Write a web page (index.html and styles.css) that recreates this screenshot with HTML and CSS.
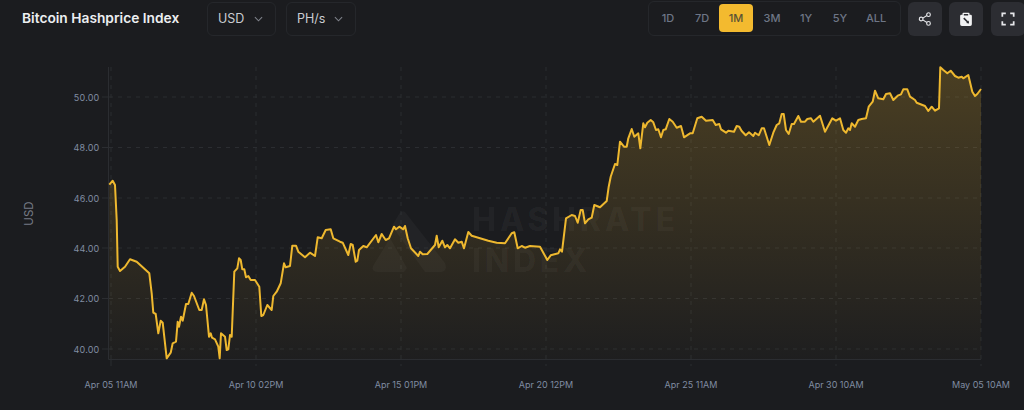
FILE: index.html
```html
<!DOCTYPE html>
<html lang="en">
<head>
<meta charset="utf-8">
<title>Bitcoin Hashprice Index</title>
<link rel="stylesheet" href="styles.css">
</head>
<body>
<header class="toolbar">
  <h1 class="title">Bitcoin Hashprice Index</h1>
  <div class="select select-usd">USD
    <svg class="chev" viewBox="0 0 10 6"><path d="M1 1l4 4 4-4"/></svg>
  </div>
  <div class="select select-unit">PH/s
    <svg class="chev" viewBox="0 0 10 6"><path d="M1 1l4 4 4-4"/></svg>
  </div>
  <div class="ranges">
    <span class="range r1">1D</span>
    <span class="range r2">7D</span>
    <span class="range active">1M</span>
    <span class="range r3">3M</span>
    <span class="range r4">1Y</span>
    <span class="range r5">5Y</span>
    <span class="range r6">ALL</span>
  </div>
  <div class="actions">
    <button class="action" aria-label="Share">
      <svg viewBox="0 0 16 16" class="ico"><circle cx="3.600" cy="8" r="2.100"/><circle cx="12" cy="3" r="2.100"/><circle cx="12" cy="13" r="2.100"/><path d="M5.500 7 10.100 4.100M5.500 9 10.100 11.900"/></svg>
    </button>
    <button class="action" aria-label="Copy">
      <svg viewBox="0 0 16 16" class="ico-solid"><path fill-rule="evenodd" d="M5 .8h6a1 1 0 0 1 1 1V3h1.200A1.500 1.500 0 0 1 14.700 4.500V14a2 2 0 0 1-2 2H3.300a2 2 0 0 1-2-2V4.500A1.500 1.500 0 0 1 2.800 3H4V1.800a1 1 0 0 1 1-1zM5.500 2.200V4h5V2.200zM5.600 6.800 4.800 7.600 9 11.800 8.200 12.600 11.500 13 11.100 9.700 10.300 10.500 6.100 6.300z"/></svg>
    </button>
    <button class="action" aria-label="Fullscreen">
      <svg viewBox="0 0 16 16" class="ico ico-bold"><path d="M1.500 5.500V1.500H5.500M10.500 1.500H14.500V5.500M14.500 10.500V14.500H10.500M5.500 14.500H1.500V10.500"/></svg>
    </button>
  </div>
</header>
<svg class="chart" viewBox="0 36 1024 374" width="1024" height="374">
  <defs>
    <linearGradient id="area" gradientUnits="userSpaceOnUse" x1="0" y1="67" x2="0" y2="359">
      <stop offset="0" stop-color="#f3ba2f" stop-opacity="0.22"/>
      <stop offset="1" stop-color="#f3ba2f" stop-opacity="0.015"/>
    </linearGradient>
  </defs>

  <g class="grid">
    <path d="M109 97H981M109 147.500H981M109 198H981M109 248H981M109 298.500H981M109 349H981"/>
    <path d="M111 67V359M256 67V366M401 67V366M546 67V366M691 67V366M836 67V366M981 67V366"/>
  </g>
  <g class="axis">
    <path d="M108.500 67V359.500H981M111 359.500V366M102 97H108M102 147.500H108M102 198H108M102 248H108M102 298.500H108M102 349H108"/>
  </g>

  <g class="wm">
    <path d="M405 212 Q402 210 399 214 L392 226 L425 272 H441 Q448 271 445 263 Z"/>
    <path d="M390 238 L373 266 Q371 272 378 272 H404 L407 268 Z"/>
    <text x="472" y="231" class="wm-text">HASHRATE</text>
    <text x="472" y="272" class="wm-text">INDEX</text>
  </g>

  <path class="area" d="M109.300 184.700 112.700 180.700 115 185 116.700 220 117.700 266.700 120 271 125 266.700 130 259.300 136.700 261.700 143.300 267.700 149.300 273.300 151.700 293.300 153.300 312.700 155.700 314 158.300 333.300 160.700 320.700 162.700 322.700 166.700 358.300 170.700 352.700 172.700 343.300 176 341.700 177.700 321.700 179 326.700 181 316.700 182.700 320.700 186 304 188.300 304 191.700 292.700 194 296 199.300 310 201.700 310 204 299.300 206 305 209 336.700 210.700 333.300 212 337.700 215 339.300 218.300 346.700 219.700 358.300 221 333.300 225 336.700 226.700 350 228.300 349.300 230 335 231.700 336.700 234.300 271.700 237.300 268.300 239 258.300 240.700 260 242.300 269.300 244.300 269.300 246 277.300 248.300 276 250.700 280 255 280 259.300 286.700 261.300 316 263.300 315 267.300 305 271.700 310 273.300 296 276.700 291.700 280.700 283.300 284 263.300 285.700 267.300 290 266 292.300 245.700 296 245.700 298.300 251.700 305 257.300 310 252.700 315 256 317.700 237.300 321.700 238.300 325.700 230 330.700 229.300 333.300 238.300 340 241.700 342.700 242.700 348.300 255 350.700 244 352.700 245 355.700 261.700 357.300 260.700 359 250 363.300 246 366.700 247.300 376 235 378.300 242.300 381.700 234 385.700 240 389 238.300 394 226.700 396 229.300 399.300 226.700 403.300 229.300 405 226 407.700 238.300 411 248.300 418.300 256 420 251.700 422.700 254.300 427.300 254 435 245 436.700 235.700 438.700 247.300 442.300 240.700 445 247.300 447.300 245 450 248.300 455 239.300 458.300 242.700 461.700 241.700 464 248.300 468.300 232 471.700 235.700 480 238.300 488.300 240.700 496.700 242.700 505 243.300 511.700 233.300 514.300 232.300 517.700 248.300 521.700 246 525 247.700 530 246 540 246.700 547.300 260 550.700 255.300 558.300 253.300 560 249.300 562 251.700 566 218.300 571.700 215 575 216 577.700 222.700 580.700 210 582.700 210 585 223.300 588.300 219.300 591.700 217.700 594.300 205 600 207.300 606.700 201 608.700 186.700 610.700 176.700 615 164 617.300 165 620 141.700 624 146.700 626.700 146.700 628.300 138.300 631.700 129 634.300 136.700 638.300 133.300 640.300 148.300 643.300 123.300 645 127.300 647.300 122.700 650.700 120 653.300 122.300 656 130 658.300 129.300 661 137.300 663.300 130 665.700 129.300 669.300 119 672.700 121.700 676.700 127.700 681 126 684 137.300 690 133.300 692.700 133.300 697.300 118.300 701.700 116.700 706 120.700 712.700 120 715.700 125 719.300 124 721 129.300 726 132.700 728.300 130.700 734 131.700 736.700 126 739.300 126.700 741.700 131 745.700 135.300 749 132.300 753.300 136 755 132.700 758.700 135.300 761.700 128.300 764 128.300 769.300 145 773.300 132.700 776.700 125 779.300 123.300 781.700 114 783.700 114 786 130 788.700 134 791.700 124 794 124 798.300 116 801 121.700 805 121.700 807.300 119 811 118.300 813.300 121.700 820 115.700 825 131.700 832.300 118.300 836 120.700 840 118.300 843.300 130 846 132.700 848.300 128.300 850 130 851.700 123.300 855 126.700 858.300 120 861.700 119 866 118.300 868.700 106.700 872.700 101.700 875 90.700 878.300 98.300 883.300 99.300 886 94 890 93.300 893.300 100 897.700 95.700 901 94.300 903.300 89.300 907.300 89.300 910 96.700 915 100 916.700 102.700 925 106 928.300 111 931.700 106.700 935 110.700 939 108.300 940.300 67.300 943.300 70 947.300 73.300 950.700 70.700 955 76 958.300 77.700 961.700 76.700 963.300 78.300 968.300 75 972.300 91.700 975 96 977.300 94 981 89V359H109.300Z"/>
  <path class="line" d="M109.300 184.700 112.700 180.700 115 185 116.700 220 117.700 266.700 120 271 125 266.700 130 259.300 136.700 261.700 143.300 267.700 149.300 273.300 151.700 293.300 153.300 312.700 155.700 314 158.300 333.300 160.700 320.700 162.700 322.700 166.700 358.300 170.700 352.700 172.700 343.300 176 341.700 177.700 321.700 179 326.700 181 316.700 182.700 320.700 186 304 188.300 304 191.700 292.700 194 296 199.300 310 201.700 310 204 299.300 206 305 209 336.700 210.700 333.300 212 337.700 215 339.300 218.300 346.700 219.700 358.300 221 333.300 225 336.700 226.700 350 228.300 349.300 230 335 231.700 336.700 234.300 271.700 237.300 268.300 239 258.300 240.700 260 242.300 269.300 244.300 269.300 246 277.300 248.300 276 250.700 280 255 280 259.300 286.700 261.300 316 263.300 315 267.300 305 271.700 310 273.300 296 276.700 291.700 280.700 283.300 284 263.300 285.700 267.300 290 266 292.300 245.700 296 245.700 298.300 251.700 305 257.300 310 252.700 315 256 317.700 237.300 321.700 238.300 325.700 230 330.700 229.300 333.300 238.300 340 241.700 342.700 242.700 348.300 255 350.700 244 352.700 245 355.700 261.700 357.300 260.700 359 250 363.300 246 366.700 247.300 376 235 378.300 242.300 381.700 234 385.700 240 389 238.300 394 226.700 396 229.300 399.300 226.700 403.300 229.300 405 226 407.700 238.300 411 248.300 418.300 256 420 251.700 422.700 254.300 427.300 254 435 245 436.700 235.700 438.700 247.300 442.300 240.700 445 247.300 447.300 245 450 248.300 455 239.300 458.300 242.700 461.700 241.700 464 248.300 468.300 232 471.700 235.700 480 238.300 488.300 240.700 496.700 242.700 505 243.300 511.700 233.300 514.300 232.300 517.700 248.300 521.700 246 525 247.700 530 246 540 246.700 547.300 260 550.700 255.300 558.300 253.300 560 249.300 562 251.700 566 218.300 571.700 215 575 216 577.700 222.700 580.700 210 582.700 210 585 223.300 588.300 219.300 591.700 217.700 594.300 205 600 207.300 606.700 201 608.700 186.700 610.700 176.700 615 164 617.300 165 620 141.700 624 146.700 626.700 146.700 628.300 138.300 631.700 129 634.300 136.700 638.300 133.300 640.300 148.300 643.300 123.300 645 127.300 647.300 122.700 650.700 120 653.300 122.300 656 130 658.300 129.300 661 137.300 663.300 130 665.700 129.300 669.300 119 672.700 121.700 676.700 127.700 681 126 684 137.300 690 133.300 692.700 133.300 697.300 118.300 701.700 116.700 706 120.700 712.700 120 715.700 125 719.300 124 721 129.300 726 132.700 728.300 130.700 734 131.700 736.700 126 739.300 126.700 741.700 131 745.700 135.300 749 132.300 753.300 136 755 132.700 758.700 135.300 761.700 128.300 764 128.300 769.300 145 773.300 132.700 776.700 125 779.300 123.300 781.700 114 783.700 114 786 130 788.700 134 791.700 124 794 124 798.300 116 801 121.700 805 121.700 807.300 119 811 118.300 813.300 121.700 820 115.700 825 131.700 832.300 118.300 836 120.700 840 118.300 843.300 130 846 132.700 848.300 128.300 850 130 851.700 123.300 855 126.700 858.300 120 861.700 119 866 118.300 868.700 106.700 872.700 101.700 875 90.700 878.300 98.300 883.300 99.300 886 94 890 93.300 893.300 100 897.700 95.700 901 94.300 903.300 89.300 907.300 89.300 910 96.700 915 100 916.700 102.700 925 106 928.300 111 931.700 106.700 935 110.700 939 108.300 940.300 67.300 943.300 70 947.300 73.300 950.700 70.700 955 76 958.300 77.700 961.700 76.700 963.300 78.300 968.300 75 972.300 91.700 975 96 977.300 94 981 89"/>

  <g class="ylabels">
    <text x="99.500" y="100.500">50.00</text>
    <text x="99.500" y="151">48.00</text>
    <text x="99.500" y="201.500">46.00</text>
    <text x="99.500" y="251.500">44.00</text>
    <text x="99.500" y="302">42.00</text>
    <text x="99.500" y="352.500">40.00</text>
  </g>
  <text class="ytitle" transform="translate(33 213.500) rotate(-90)">USD</text>
  <g class="xlabels">
    <text x="111" y="388">Apr 05 11AM</text>
    <text x="256" y="388">Apr 10 02PM</text>
    <text x="401" y="388">Apr 15 01PM</text>
    <text x="546" y="388">Apr 20 12PM</text>
    <text x="691" y="388">Apr 25 11AM</text>
    <text x="836" y="388">Apr 30 10AM</text>
    <text x="981" y="388">May 05 10AM</text>
  </g>
</svg>
</body>
</html>
```

FILE: styles.css
```css
* { box-sizing: border-box; }
html, body { margin: 0; height: 100%; }
body {
  background: #1b1c1f;
  font-family: Inter, "Liberation Sans", sans-serif;
  overflow: hidden;
  width: 1024px;
  height: 410px;
}
.toolbar {
  display: flex;
  align-items: center;
  height: 36px;
  width: 1025px;
  padding-left: 22px;
}
.title {
  margin: 0 28px 0 0;
  width: 157px;
  white-space: nowrap;
  font-size: 13.750px;
  font-weight: 600;
  color: #eceef0;
}
.select {
  display: flex;
  align-items: center;
  justify-content: space-between;
  height: 34px;
  margin-top: 1px;
  padding: 0 12px 0 10px;
  border: 1px solid #25272b;
  border-radius: 6px;
  font-size: 12.500px;
  color: #c9ccd2;
}
.select-usd { width: 69px; margin-right: 10px; }
.select-unit { width: 70px; }
.chev { width: 9px; height: 6px; fill: none; stroke: #7e828a; stroke-width: 1.200; }
.ranges {
  display: flex;
  align-items: center;
  width: 253px;
  height: 35px;
  margin-left: auto;
  margin-right: 7px;
  padding-left: 2px;
  border: 1px solid #25272b;
  border-radius: 6px;
}
.range {
  display: flex;
  align-items: center;
  justify-content: center;
  width: 34px;
  height: 28px;
  font-size: 11px;
  font-weight: 500;
  color: #6e7686;
  border-radius: 4px;
}
.r3 { margin-left: 2px; }
.r6 { margin-left: 2px; }
.range.active { background: #f3ba2f; color: #5a5236; }
.actions { display: flex; gap: 7px; margin-top: 1px; }
.action {
  display: flex;
  align-items: center;
  justify-content: center;
  width: 34px;
  height: 34px;
  padding: 0;
  border: 0;
  border-radius: 6px;
  background: #2c2d32;
}
.action:last-child { margin-left: 1px; }
.ico { width: 14px; height: 14px; fill: none; stroke: #e6e7ea; stroke-width: 1.300; }
.ico-bold { stroke-width: 2; }
.ico-solid { width: 14px; height: 14px; fill: #f1f2f3; }
.chart { display: block; }
.grid path {
  fill: none;
  stroke: #2b2d31;
  stroke-width: 1;
  stroke-dasharray: 4 5;
}
.axis path { fill: none; stroke: #2b2d31; stroke-width: 1; }
.wm path { fill: #ffffff; fill-opacity: 0.03; }
.wm-text {
  fill: #ffffff;
  fill-opacity: 0.035;
  font-size: 32px;
  font-weight: 800;
  letter-spacing: 3.700px;
}
.area { fill: url(#area); }
.line {
  fill: none;
  stroke: #eeb82f;
  stroke-width: 2;
  stroke-linejoin: round;
}
.ylabels text {
  text-anchor: end;
  font-size: 9px;
  letter-spacing: 0.200px;
  fill: #808ca2;
}
.xlabels text {
  text-anchor: middle;
  font-size: 9px;
  fill: #808ca2;
}
.ytitle {
  text-anchor: middle;
  font-size: 11.500px;
  fill: #757a85;
}
```
